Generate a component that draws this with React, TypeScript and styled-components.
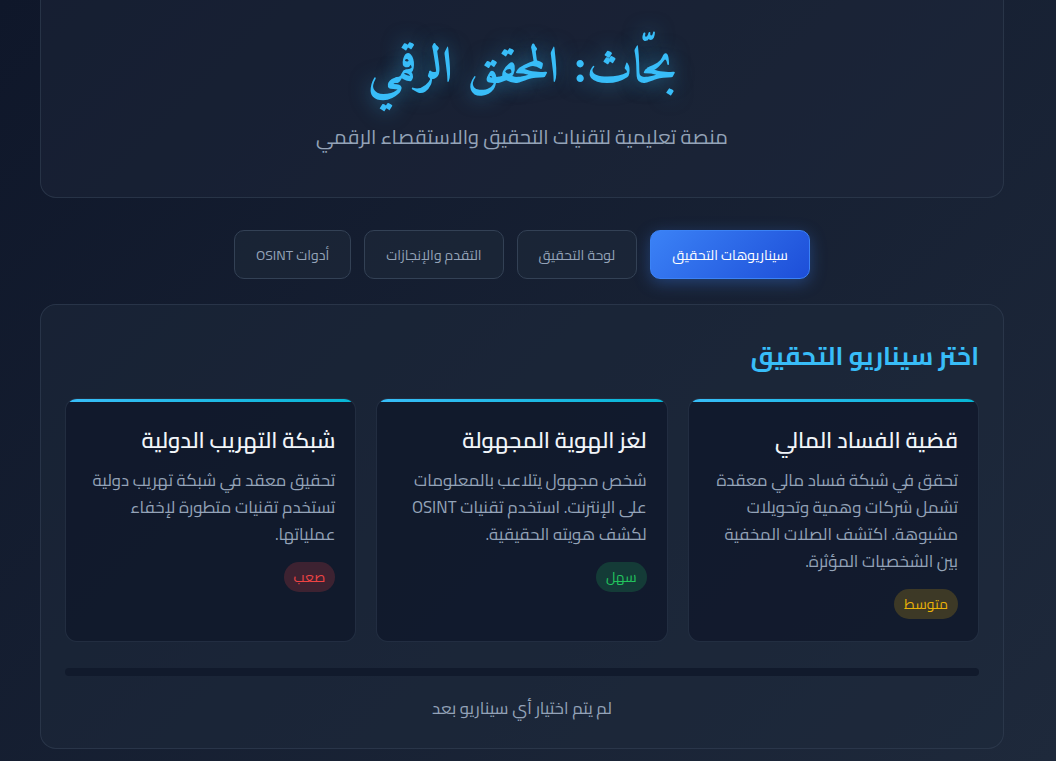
import React from "react";
import styled, { createGlobalStyle } from "styled-components";

const GlobalStyle = createGlobalStyle`
  html, body { margin: 0; padding: 0; }
  body {
    min-height: 761px;
    background: linear-gradient(135deg, #0f172a 0%, #1e293b 100%);
    font-family: 'Cairo', 'Noto Kufi Arabic', sans-serif;
    color: #e2e8f0;
    overflow: hidden;
  }
  * { box-sizing: border-box; }
`;

const Page = styled.div`
  direction: rtl;
  width: 964px;
  margin: -20px 52px 0 40px;
  display: flex;
  flex-direction: column;
`;

const Header = styled.header`
  background: rgba(30, 41, 59, 0.45);
  border: 1px solid rgba(51, 65, 85, 0.6);
  border-radius: 16px;
  padding: 52px 24px 42px;
  text-align: center;
`;

const Title = styled.h1`
  margin: 0;
  font-family: 'Amiri', serif;
  font-weight: 700;
  font-size: 50px;
  line-height: 75px;
  color: #38bdf8;
  text-shadow: 0 0 20px rgba(56, 189, 248, 0.5);
`;

const Subtitle = styled.p`
  margin: 10px 0 0;
  font-size: 20px;
  color: #94a3b8;
`;

const Tabs = styled.nav`
  display: flex;
  justify-content: center;
  gap: 13px;
  margin: 32px 0 25px;
`;

const Tab = styled.button<{ $active?: boolean }>`
  font-family: 'Cairo', 'Noto Kufi Arabic', sans-serif;
  font-size: 14px;
  height: 49px;
  padding: 0 21px;
  border-radius: 10px;
  cursor: pointer;
  border: 1px solid ${(p) => (p.$active ? "#3b82f6" : "#334155")};
  background: ${(p) =>
    p.$active ? "linear-gradient(135deg, #3b82f6, #1d4ed8)" : "rgba(30, 41, 59, 0.6)"};
  color: ${(p) => (p.$active ? "#ffffff" : "#94a3b8")};
  box-shadow: ${(p) => (p.$active ? "0 4px 16px rgba(59, 130, 246, 0.35)" : "none")};
`;

const Panel = styled.section`
  background: rgba(30, 41, 59, 0.5);
  border: 1px solid rgba(51, 65, 85, 0.6);
  border-radius: 16px;
  padding: 24px;
`;

const PanelTitle = styled.h2`
  margin: 3px 0 19px;
  font-size: 25px;
  font-weight: 700;
  color: #38bdf8;
  line-height: 47px;
`;

const Grid = styled.div`
  display: grid;
  grid-template-columns: repeat(3, 1fr);
  gap: 20px;
`;

const Card = styled.article`
  position: relative;
  overflow: hidden;
  background: rgba(15, 23, 42, 0.75);
  border: 1px solid rgba(51, 65, 85, 0.5);
  border-radius: 12px;
  padding: 20px 20px 22px;
  display: flex;
  flex-direction: column;
  align-items: flex-start;
  &::before {
    content: "";
    position: absolute;
    top: 0;
    left: 0;
    right: 0;
    height: 3px;
    background: linear-gradient(90deg, #38bdf8, #06b6d4);
  }
`;

const CardTitle = styled.h3`
  margin: 1px 0 6px;
  font-size: 22px;
  font-weight: 600;
  color: #f1f5f9;
  line-height: 41px;
`;

const CardText = styled.p`
  margin: 0 0 14px;
  font-size: 16.8px;
  line-height: 27px;
  color: #94a3b8;
`;

const levels = {
  easy: { bg: "rgba(34, 197, 94, 0.2)", fg: "#22c55e" },
  medium: { bg: "rgba(234, 179, 8, 0.2)", fg: "#eab308" },
  hard: { bg: "rgba(239, 68, 68, 0.2)", fg: "#ef4444" },
};

const Badge = styled.span<{ $level: keyof typeof levels }>`
  display: inline-flex;
  align-items: center;
  height: 30px;
  padding: 0 10px;
  border-radius: 15px;
  font-size: 14px;
  background: ${(p) => levels[p.$level].bg};
  color: ${(p) => levels[p.$level].fg};
`;

const Progress = styled.div`
  height: 8px;
  margin-top: 26px;
  border-radius: 4px;
  background: #111a2c;
`;

const Status = styled.p`
  margin: 17px 0 0;
  text-align: center;
  font-size: 16.8px;
  line-height: 31px;
  color: #94a3b8;
`;

const scenarios: { title: string; text: string; level: keyof typeof levels; label: string }[] = [
  {
    title: "قضية الفساد المالي",
    text: "تحقق في شبكة فساد مالي معقدة تشمل شركات وهمية وتحويلات مشبوهة. اكتشف الصلات المخفية بين الشخصيات المؤثرة.",
    level: "medium",
    label: "متوسط",
  },
  {
    title: "لغز الهوية المجهولة",
    text: "شخص مجهول يتلاعب بالمعلومات على الإنترنت. استخدم تقنيات OSINT لكشف هويته الحقيقية.",
    level: "easy",
    label: "سهل",
  },
  {
    title: "شبكة التهريب الدولية",
    text: "تحقيق معقد في شبكة تهريب دولية تستخدم تقنيات متطورة لإخفاء عملياتها.",
    level: "hard",
    label: "صعب",
  },
];

const tabs = ["سيناريوهات التحقيق", "لوحة التحقيق", "التقدم والإنجازات", "أدوات OSINT"];

export default function App() {
  return (
    <>
      <GlobalStyle />
      <Page>
        <Header>
          <Title>بحّاث: المحقق الرقمي</Title>
          <Subtitle>منصة تعليمية لتقنيات التحقيق والاستقصاء الرقمي</Subtitle>
        </Header>
        <Tabs>
          {tabs.map((t, i) => (
            <Tab key={t} $active={i === 0}>
              {t}
            </Tab>
          ))}
        </Tabs>
        <Panel>
          <PanelTitle>اختر سيناريو التحقيق</PanelTitle>
          <Grid>
            {scenarios.map((s) => (
              <Card key={s.title}>
                <CardTitle>{s.title}</CardTitle>
                <CardText>{s.text}</CardText>
                <Badge $level={s.level}>{s.label}</Badge>
              </Card>
            ))}
          </Grid>
          <Progress />
          <Status>لم يتم اختيار أي سيناريو بعد</Status>
        </Panel>
      </Page>
    </>
  );
}
